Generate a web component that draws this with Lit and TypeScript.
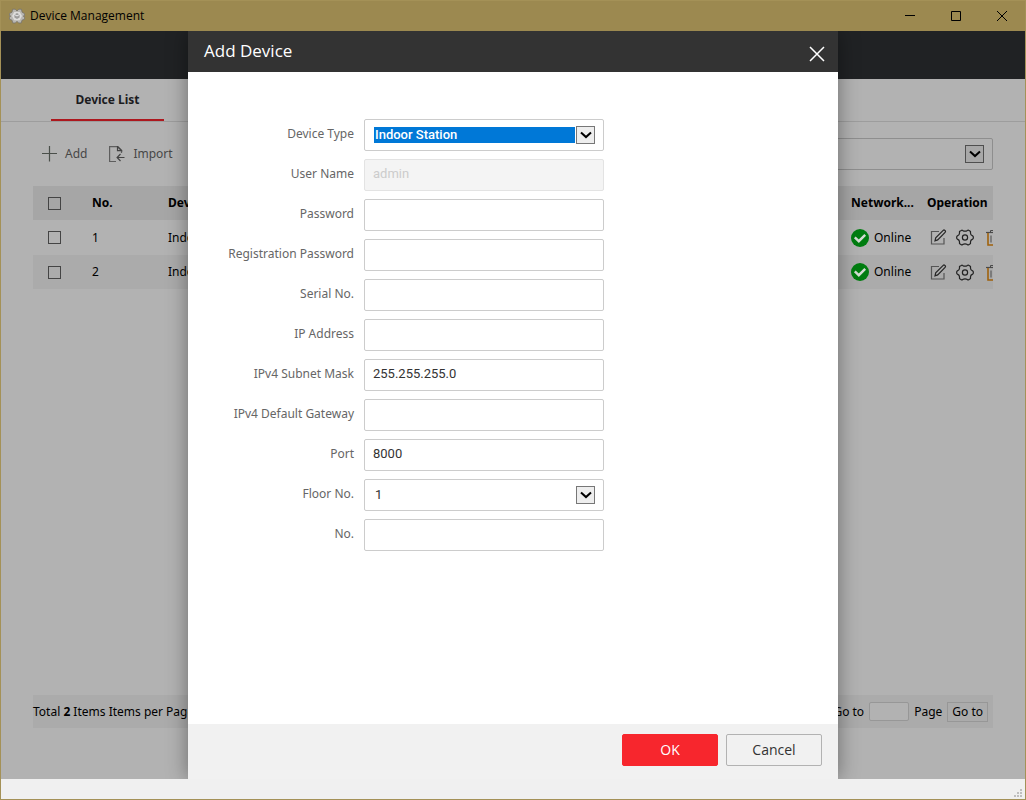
import { LitElement, html, css } from "lit";
import { customElement, property } from "lit/decorators.js";

interface Field {
  id: string;
  label: string;
  kind: "select" | "text" | "password";
  value?: string;
  disabled?: boolean;
  active?: boolean;
}

const FIELDS: Field[] = [
  { id: "type", label: "Device Type", kind: "select", value: "Indoor Station", active: true },
  { id: "user", label: "User Name", kind: "text", value: "admin", disabled: true },
  { id: "password", label: "Password", kind: "password" },
  { id: "registration", label: "Registration Password", kind: "password" },
  { id: "serial", label: "Serial No.", kind: "text" },
  { id: "ip", label: "IP Address", kind: "text" },
  { id: "mask", label: "IPv4 Subnet Mask", kind: "text", value: "255.255.255.0" },
  { id: "gateway", label: "IPv4 Default Gateway", kind: "text" },
  { id: "port", label: "Port", kind: "text", value: "8000" },
  { id: "floor", label: "Floor No.", kind: "select", value: "1" },
  { id: "number", label: "No.", kind: "text" },
];

const chevron = html`<svg width="13" height="8" viewBox="0 0 13 8" aria-hidden="true">
  <path d="M2 1.500l5 4.600 5-4.600" fill="none" stroke="currentColor" stroke-width="2" />
</svg>`;

const gearLogo = html`<svg width="16" height="16" viewBox="0 0 16 16" aria-hidden="true">
  <path d="M3.600 1.200h2.600L8 3l1.800-1.800h2.600l.7 3 2.500 1.500v2.200L14.200 8l1.400 1.200v2L13 12.200l-.8 2.800H9.800L8 13.400 6.200 15H3.800L3 12.200.4 11.200v-2L1.800 8 .4 7.800V5.600l2.600-1.400z" fill="#b9b7b2" stroke="#77736b" stroke-width=".8" />
  <path d="M5.300 4h5.400L13 8l-2.300 4.200H5.300L3 8z" fill="#dedddb" />
  <path d="M8 5l2.600 1.400v3L8 11 5.400 9.400v-3z" fill="#9d9c9b" />
  <path d="M5.400 6.400L8 8l2.600-1.600" fill="none" stroke="#eee" />
</svg>`;

const editIcon = html`<svg width="17" height="17" viewBox="0 0 17 17" fill="none" aria-hidden="true">
  <path d="M9 2.500H1.500v12.500h12.500V9" stroke="#555" stroke-width="1.200" />
  <path d="M5 11.800l.7-2.900 7.500-7.500c.5-.5 1.100-.5 1.600 0l.3.3c.5.500.5 1.100 0 1.600L7.700 10.900z" stroke="#262626" stroke-width="1.200" />
</svg>`;

const cogIcon = html`<svg width="18" height="17" viewBox="0 0 18 17" fill="none" stroke="#222" stroke-linejoin="round" aria-hidden="true">
  <path d="M5.400 1.400Q6 .8 6.600 1.400Q9 3 11.400 1.400Q12 .8 12.700 1.300L14.200 2.300Q14.700 2.700 14.500 3.400Q14.200 6 16.600 6.900Q17.300 7.200 17.300 8V9Q17.300 9.800 16.600 10.100Q14.200 11 14.500 13.600Q14.700 14.300 14.200 14.700L12.700 15.700Q12 16.200 11.400 15.600Q9 14 6.600 15.600Q6 16.200 5.300 15.700L3.800 14.700Q3.300 14.300 3.500 13.600Q3.800 11 1.400 10.100Q.7 9.800 .7 9V8Q.7 7.200 1.400 6.900Q3.800 6 3.500 3.400Q3.300 2.700 3.800 2.300Z" stroke-width="1.200" />
  <circle cx="9" cy="8.500" r="2.600" stroke-width="1.200" />
</svg>`;

const trashIcon = html`<svg width="18" height="17" viewBox="-3 0 18 17" fill="none" aria-hidden="true">
  <path d="M4.500 3V1.500h6V3" stroke="#4a4a4a" />
  <path d="M0 3.500h15" stroke="#4a4a4a" stroke-width="1.200" />
  <path d="M2 4v12h11V4" stroke="#a0620c" stroke-width="1.600" />
  <path d="M5 6.500v7M7.500 6.500v7M10 6.500v7" stroke="#4a4a4a" />
</svg>`;

const onlineIcon = html`<svg width="18" height="18" viewBox="0 0 18 18" aria-hidden="true">
  <circle cx="9" cy="9" r="9" fill="#007d10" />
  <path d="M3.800 8.300l4 3.900 6.400-6.400" fill="none" stroke="#d3dcd3" stroke-width="2.400" />
</svg>`;

@customElement("select-box")
class SelectBox extends LitElement {
  @property() value = "";
  @property() name = "";
  @property({ type: Boolean }) active = false;

  static styles = css`
    :host {
      display: block;
    }
    .box {
      box-sizing: border-box;
      height: 32px;
      display: flex;
      align-items: center;
      gap: 1px;
      padding: 0 8px 0 9px;
      border: 1px solid var(--box-border, #ccc);
      border-radius: 2px;
      background: var(--box-fill, #fff);
    }
    .select {
      appearance: none;
      flex: 1;
      min-width: 0;
      height: 16px;
      padding: 0 1px 1px;
      border: 0;
      border-radius: 0;
      outline: 0;
      background: transparent;
      color: #333;
      font: 13px/15px Roboto, "Liberation Sans", sans-serif;
    }
    .select.active {
      background: #0078d7;
      color: #fff;
      font-weight: 500;
    }
    .arrow {
      box-sizing: border-box;
      width: 19px;
      height: 18px;
      display: grid;
      place-items: center;
      border: 1px solid var(--arrow-border, #777);
      background: var(--arrow-fill, #eee);
      color: #000;
      pointer-events: none;
    }
  `;

  render() {
    return html`<div class="box">
      <select class="select ${this.active ? "active" : ""}" aria-label=${this.name}>
        <option>${this.value}</option>
      </select>
      <span class="arrow">${chevron}</span>
    </div>`;
  }
}

@customElement("add-device-dialog")
class AddDeviceDialog extends LitElement {
  static styles = css`
    :host {
      display: flex;
      flex-direction: column;
      background: #fff;
      box-shadow: 0 0 20px rgba(0, 0, 0, 0.4);
      font-family: "Open Sans", "Noto Sans", sans-serif;
    }
    .header {
      box-sizing: border-box;
      display: flex;
      align-items: center;
      justify-content: space-between;
      height: 41px;
      padding: 0 13px 2px 16px;
      background: #333;
      color: #fff;
    }
    .title {
      margin: 0;
      font-size: 17px;
      line-height: 24px;
      font-weight: 400;
    }
    .close {
      display: grid;
      margin-top: 6px;
      padding: 0;
      border: 0;
      background: none;
      color: #fff;
    }
    .form {
      flex: 1;
      display: flex;
      flex-direction: column;
      gap: 8px;
      padding: 47px 24px 24px 16px;
    }
    .row {
      display: grid;
      grid-template-columns: 150px 240px;
      column-gap: 10px;
    }
    .label {
      color: #666;
      font: 12px/29px "Noto Sans", "Open Sans", sans-serif;
      text-align: right;
      white-space: nowrap;
    }
    .input {
      box-sizing: border-box;
      width: 100%;
      height: 32px;
      padding: 0 8px 3px;
      border: 1px solid #ccc;
      border-radius: 2px;
      outline: 0;
      background: #fff;
      color: #333;
      font: 13px/16px Roboto, "Liberation Sans", sans-serif;
    }
    .input:disabled {
      border-color: #e3e3e3;
      background: #f4f4f4;
      color: #ccc;
    }
    .actions {
      display: flex;
      justify-content: flex-end;
      gap: 8px;
      padding: 10px 16px 13px;
      background: #f1f1f1;
    }
    .button {
      width: 96px;
      height: 32px;
      padding: 0;
      border: 1px solid #b2b2b2;
      border-radius: 2px;
      background: #f1f1f1;
      color: #333;
      font: 14px/20px "Open Sans", "Noto Sans", sans-serif;
    }
    .button.primary {
      border-color: #f7262d;
      background: #f7262d;
      color: #fff;
    }
  `;

  private control(f: Field) {
    if (f.kind === "select") {
      return html`<select-box id=${f.id} .name=${f.label} .value=${f.value ?? ""} ?active=${f.active}></select-box>`;
    }
    return html`<input class="input" id=${f.id} type=${f.kind} .value=${f.value ?? ""} ?disabled=${f.disabled} />`;
  }

  render() {
    return html`
      <header class="header">
        <h2 class="title">Add Device</h2>
        <button class="close" aria-label="Close">
          <svg width="16" height="16" viewBox="0 0 16 16" aria-hidden="true">
            <path d="M1 1l14 14M15 1L1 15" stroke="currentColor" stroke-width="1.500" />
          </svg>
        </button>
      </header>
      <form class="form">
        ${FIELDS.map(
          (f) => html`<div class="row">
            <label class="label" for=${f.id}>${f.label}</label>
            ${this.control(f)}
          </div>`
        )}
      </form>
      <footer class="actions">
        <button class="button primary">OK</button>
        <button class="button">Cancel</button>
      </footer>
    `;
  }
}

@customElement("app-root")
class AppRoot extends LitElement {
  static styles = css`
    :host {
      box-sizing: border-box;
      display: flex;
      flex-direction: column;
      min-height: 100vh;
      border: 1px solid #a49157;
      background: #f0f0f0;
      color: #000;
      font: 12px/20px "Noto Sans", "Open Sans", sans-serif;
    }
    .titlebar {
      display: flex;
      align-items: center;
      gap: 5px;
      height: 30px;
      padding: 0 12px 0 8px;
      background: #9c8950;
    }
    .caption {
      flex: 1;
      font-family: "Open Sans", "Noto Sans", sans-serif;
    }
    .window-buttons {
      display: flex;
      gap: 24px;
    }
    .window-button {
      display: grid;
      place-items: center;
      width: 22px;
      height: 22px;
      padding: 0;
      border: 0;
      background: none;
      color: #000;
    }
    .stage {
      flex: 1;
      display: grid;
      grid-template: 1fr / 1fr;
      overflow: hidden;
    }
    .page,
    .dialog {
      grid-area: 1 / 1;
    }
    .dialog {
      justify-self: center;
      width: 650px;
      max-width: 100%;
    }
    .page {
      display: flex;
      flex-direction: column;
      min-width: 0;
      background: #b2b2b2;
    }
    .banner {
      height: 48px;
      background: #202224;
    }
    .tabs {
      display: flex;
      height: 42px;
      padding-left: 50px;
      border-bottom: 1px solid #9d9d9d;
    }
    .tab {
      box-sizing: border-box;
      width: 113px;
      border-bottom: 2px solid #ad181e;
      color: #1c1c1f;
      font-weight: 700;
      line-height: 41px;
      text-align: center;
      text-decoration: none;
    }
    .main {
      flex: 1;
      display: flex;
      flex-direction: column;
      padding: 16px 32px 51px;
    }
    .toolbar {
      display: flex;
      align-items: center;
      gap: 22px;
      padding-left: 8px;
      margin-bottom: 16px;
    }
    .tool {
      display: flex;
      align-items: center;
      gap: 8px;
      padding: 0;
      border: 0;
      background: none;
      color: #474747;
      font: inherit;
    }
    .filter {
      width: 240px;
      margin-left: auto;
      --box-border: #8e8e8e;
      --box-fill: #b2b2b2;
      --arrow-border: #4f4f4f;
      --arrow-fill: #a8a8a8;
    }
    .table {
      width: 100%;
      table-layout: fixed;
      border-collapse: collapse;
    }
    .cell {
      height: 34px;
      padding: 0;
      overflow: hidden;
      text-align: left;
      white-space: nowrap;
    }
    .head {
      background: #a6a6a6;
    }
    .odd .cell {
      height: 35px;
    }
    .even {
      background: #ababab;
    }
    .col-check {
      width: 59px;
    }
    .col-no {
      width: 76px;
    }
    .col-network {
      width: 76px;
    }
    .col-operation {
      width: 66px;
    }
    .check {
      appearance: none;
      box-sizing: border-box;
      display: block;
      width: 13px;
      height: 13px;
      margin: 0 15px;
      border: 1px solid #444;
    }
    .status {
      display: flex;
      align-items: center;
      gap: 5px;
    }
    .operations {
      display: flex;
      gap: 9px;
      padding-left: 3px;
    }
    .operation {
      flex: none;
      display: grid;
      padding: 0;
      border: 0;
      background: none;
    }
    .pager {
      display: flex;
      align-items: center;
      justify-content: space-between;
      height: 33px;
      margin-top: auto;
      padding-right: 5px;
      background: #ababab;
    }
    .jump {
      display: flex;
      align-items: center;
      gap: 5px;
    }
    .page-number {
      box-sizing: border-box;
      width: 40px;
      height: 19px;
      padding: 0 4px;
      border: 1px solid #979797;
      border-radius: 2px;
      background: #b2b2b2;
    }
    .go {
      height: 20px;
      padding: 0 4px;
      border: 1px solid #979797;
      background: none;
      color: #000;
      font: 12px/18px "Noto Sans", "Open Sans", sans-serif;
    }
    .statusbar {
      display: flex;
      align-items: flex-end;
      justify-content: flex-end;
      height: 20px;
      padding: 0 3px 0 0;
    }
    .grip {
      margin-bottom: 2px;
      fill: #bfbfbf;
    }
  `;

  render() {
    return html`
      <header class="titlebar">
        ${gearLogo}
        <span class="caption">Device Management</span>
        <div class="window-buttons">
          <button class="window-button" aria-label="Minimize">
            <svg width="10" height="10" viewBox="0 0 10 10"><path d="M0 4.500h10" stroke="currentColor" /></svg>
          </button>
          <button class="window-button" aria-label="Maximize">
            <svg width="10" height="10" viewBox="0 0 10 10"><path d="M.5.500h9v9h-9z" fill="none" stroke="currentColor" /></svg>
          </button>
          <button class="window-button" aria-label="Close window">
            <svg width="10" height="10" viewBox="0 0 10 10"><path d="M0 0l10 10M10 0L0 10" stroke="currentColor" /></svg>
          </button>
        </div>
      </header>
      <div class="stage">
        <div class="page">
          <div class="banner"></div>
          <nav class="tabs"><a class="tab" href="#devices">Device List</a></nav>
          <main class="main">
            <div class="toolbar">
              <button class="tool">
                <svg width="16" height="16" viewBox="0 0 16 16"><path d="M1 7.500h15M8.500 0v15.500" stroke="#4a4f4a" stroke-width="1.200" /></svg>
                Add
              </button>
              <button class="tool">
                <svg width="16" height="16" viewBox="0 0 16 16" fill="none">
                  <path d="M7 15.500H.6V.6h8.200l3.700 3.700V7" stroke="#5e5e5e" stroke-width="1.200" />
                  <path d="M8.500.6v4h4zM15.500 11.500H8.500M11.500 8l-3.400 3.500 3.400 3.500" stroke="#444" stroke-width="1.200" />
                </svg>
                Import
              </button>
              <select-box class="filter" .name=${"Filter"}></select-box>
            </div>
            <table class="table">
              <thead>
                <tr class="head">
                  <th class="cell col-check"><input class="check" type="checkbox" aria-label="Select all" /></th>
                  <th class="cell col-no">No.</th>
                  <th class="cell">Device Type</th>
                  <th class="cell col-network">Network...</th>
                  <th class="cell col-operation">Operation</th>
                </tr>
              </thead>
              <tbody>
                ${[1, 2].map(
                  (n) => html`<tr class=${n % 2 ? "odd" : "even"}>
                    <td class="cell"><input class="check" type="checkbox" aria-label="Select device ${n}" /></td>
                    <td class="cell">${n}</td>
                    <td class="cell">Indoor Station</td>
                    <td class="cell"><div class="status">${onlineIcon}Online</div></td>
                    <td class="cell">
                      <div class="operations">
                        <button class="operation" aria-label="Edit">${editIcon}</button>
                        <button class="operation" aria-label="Configure">${cogIcon}</button>
                        <button class="operation" aria-label="Delete">${trashIcon}</button>
                      </div>
                    </td>
                  </tr>`
                )}
              </tbody>
            </table>
            <footer class="pager">
              <span>Total <b>2</b> Items Items per Page</span>
              <div class="jump">
                <label for="page-number">Go to</label>
                <input class="page-number" id="page-number" />
                <span>Page</span>
                <button class="go">Go to</button>
              </div>
            </footer>
          </main>
        </div>
        <add-device-dialog class="dialog"></add-device-dialog>
      </div>
      <footer class="statusbar">
        <svg class="grip" width="8" height="8" viewBox="0 0 8 8" aria-hidden="true">
          <path d="M6 0h2v2H6zM3 3h2v2H3zM6 3h2v2H6zM0 6h2v2H0zM3 6h2v2H3zM6 6h2v2H6z" />
        </svg>
      </footer>
    `;
  }
}
